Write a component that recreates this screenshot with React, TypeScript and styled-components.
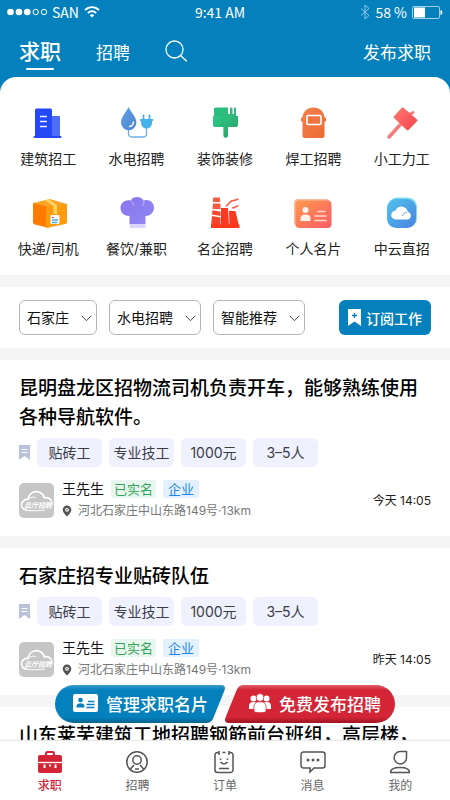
import React from "react";
import styled, { createGlobalStyle, css } from "styled-components";

const BLUE = "#0481bd";
const RED = "#d32535";

const GlobalStyle = createGlobalStyle`
  *, *::before, *::after { box-sizing: border-box; }
  body {
    margin: 0;
    background: #f5f5f5;
    font-family: Inter, "Noto Sans CJK SC", sans-serif;
    color: #111;
  }
  button, select { font: inherit; color: inherit; margin: 0; }
  button { border: 0; padding: 0; background: none; cursor: pointer; }
  a { color: inherit; text-decoration: none; }
  h2, p, ul { margin: 0; padding: 0; }
  ul { list-style: none; }
  svg { display: block; flex: none; }
`;

const Shell = styled.div`
  display: flex;
  flex-direction: column;
  height: 100vh;
  overflow: hidden;
`;

const Header = styled.header`
  background: ${BLUE};
  color: #fff;
`;

const StatusBar = styled.div`
  display: grid;
  grid-template-columns: 1fr auto 1fr;
  align-items: center;
  height: 24px;
  padding: 0 7px;
  font-family: "Noto Sans CJK SC", sans-serif;
  font-size: 14px;
  line-height: 24px;
`;

const Clock = styled.time`
  margin-right: 10px;
`;

const StatusGroup = styled.div<{ $end?: boolean }>`
  display: flex;
  align-items: center;
  gap: 5px;
  justify-content: ${(p) => (p.$end ? "flex-end" : "flex-start")};
`;

const TopTabs = styled.nav`
  display: flex;
  align-items: center;
  height: 53px;
  padding: 0 19px;
`;

const TopTab = styled.button<{ $active?: boolean }>`
  position: relative;
  font-size: 17px;
  line-height: 32px;
  margin-right: 35px;
  padding-top: 5px;
  ${(p) =>
    p.$active &&
    css`
      font-size: 21px;
      font-weight: 500;
      padding-top: 2px;
      &::after {
        content: "";
        position: absolute;
        left: 7px;
        right: 7px;
        bottom: -2px;
        height: 2px;
        border-radius: 1px;
        background: #fff;
      }
    `}
`;

const SearchButton = styled.button``;

const PostLink = styled.a`
  margin-left: auto;
  padding-top: 5px;
  font-size: 17px;
  line-height: 32px;
`;

const Content = styled.main`
  flex: 1;
  min-height: 0;
  overflow-y: auto;
  scrollbar-width: none;
  background: linear-gradient(${BLUE} 0 30px, #f5f5f5 30px);
`;

const CategoryPanel = styled.section`
  display: grid;
  grid-template-columns: repeat(5, 1fr);
  row-gap: 16px;
  padding: 27px 4px 7px;
  background: #fff;
  border-radius: 16px 16px 0 0;
`;

const Category = styled.a`
  display: flex;
  flex-direction: column;
  align-items: center;
  gap: 7px;
  height: 74px;
  font-size: 14px;
  line-height: 24px;
  white-space: nowrap;
  color: #222;
  padding-top: 2px;
`;

const FilterBar = styled.form`
  display: flex;
  gap: 12px;
  margin: 12px 0;
  padding: 13px 19px;
  background: #fff;
`;

const SelectBox = styled.div<{ $width: number }>`
  position: relative;
  width: ${(p) => p.$width}px;
`;

const Select = styled.select`
  appearance: none;
  width: 100%;
  height: 35px;
  padding: 0 0 0 7px;
  border: 1px solid #b5b5b5;
  border-radius: 6px;
  background: #fff;
  font-size: 14px;
`;

const Chevron = styled.svg`
  position: absolute;
  right: 5px;
  top: 15px;
  pointer-events: none;
`;

const SubscribeButton = styled.button`
  display: flex;
  align-items: center;
  justify-content: center;
  gap: 5px;
  width: 92px;
  height: 35px;
  margin-left: auto;
  border-radius: 6px;
  background: ${BLUE};
  color: #fff;
  font-size: 14px;
  font-weight: 500;
  white-space: nowrap;
`;

const JobCard = styled.article`
  margin-bottom: 12px;
  padding: 14px 19px 18px;
  background: #fff;
`;

const JobTitle = styled.h2`
  font-size: 19px;
  line-height: 29px;
  font-weight: 500;
  color: #000;
`;

const TagRow = styled.ul`
  display: flex;
  align-items: center;
  gap: 7px;
  margin: 6px 0 16px;
`;

const Tag = styled.li`
  min-width: 65px;
  border-radius: 6px;
  background: #eff1ff;
  color: #3c3c44;
  font-size: 14px;
  line-height: 29px;
  text-align: center;
`;

const PosterRow = styled.div`
  display: flex;
  align-items: center;
  gap: 8px;
`;

const PosterInfo = styled.div`
  flex: 1;
  height: 41px;
  margin: -3px 0;
`;

const NameLine = styled.div`
  display: flex;
  align-items: center;
  gap: 7px;
  font-size: 14px;
  line-height: 18px;
`;

const Badge = styled.span<{ $tone: "green" | "blue" }>`
  padding: 0 ${(p) => (p.$tone === "green" ? 3 : 5)}px;
  border-radius: 2px;
  font-size: 13px;
  color: ${(p) => (p.$tone === "green" ? "#35a35c" : "#1e86e8")};
  background: ${(p) => (p.$tone === "green" ? "#e8f7ed" : "#e3f1fe")};
`;

const Address = styled.p`
  display: flex;
  align-items: center;
  gap: 6px;
  margin-top: 4px;
  font-size: 12px;
  line-height: 18px;
  color: #777;
`;

const PostTime = styled.time`
  font-size: 12px;
  line-height: 18px;
  color: #222;
`;

const Footer = styled.footer`
  position: relative;
`;

const FloatingActions = styled.div`
  position: absolute;
  left: 0;
  right: 0;
  bottom: 100%;
  display: flex;
  justify-content: center;
  padding-bottom: 18px;
`;

const ActionButton = styled.button<{ $side: "left" | "right" }>`
  position: relative;
  z-index: 0;
  display: flex;
  align-items: center;
  gap: 8px;
  width: 170px;
  height: 38px;
  padding-left: ${(p) => (p.$side === "left" ? 18 : 24)}px;
  padding-bottom: 2px;
  color: #fff;
  font-size: 17px;
  font-weight: 500;
  white-space: nowrap;
  --fill: ${(p) =>
    p.$side === "left"
      ? "linear-gradient(#3b9ccb 0, #0481bd 5px, #0481bd 32px, #05648f 38px)"
      : "linear-gradient(#e0606b 0, #d32535 5px, #d32535 32px, #9f1523 38px)"};
  &::before, &::after {
    content: "";
    position: absolute;
    z-index: -1;
    top: 0;
    bottom: 0;
    background: var(--fill);
  }
  &::before {
    ${(p) => (p.$side === "left" ? "left: 0; right: 30px;" : "left: 30px; right: 0;")}
    border-radius: 19px;
  }
  &::after {
    ${(p) => (p.$side === "left" ? "left: 30px; right: 6px;" : "left: 6px; right: 30px;")}
    border-radius: 5px;
    transform: skewX(-22deg);
  }
`;

const BottomNav = styled.nav`
  display: grid;
  grid-template-columns: repeat(5, 1fr);
  height: 59px;
  padding: 9px 6px 0;
  background: #fff;
  box-shadow: 0 -1px 1px #e8e8e8;
  position: relative;
`;

const NavItem = styled.a<{ $active?: boolean }>`
  display: flex;
  flex-direction: column;
  align-items: center;
  gap: 3px;
  font-size: 12px;
  line-height: 18px;
  color: ${(p) => (p.$active ? RED : "#666")};
  font-weight: ${(p) => (p.$active ? 500 : 400)};
`;

const Gradient = ({ id, from, to }: { id: string; from: string; to: string }) => (
  <defs>
    <linearGradient id={id} x1="0" y1="0" x2="1" y2="1">
      <stop offset="0" stopColor={from} />
      <stop offset="1" stopColor={to} />
    </linearGradient>
  </defs>
);

const Art = ({ children }: { children: React.ReactNode }) => (
  <svg width="40" height="34" viewBox="0 0 40 34" aria-hidden="true">
    {children}
  </svg>
);

const categories: { label: string; art: React.ReactNode }[] = [
  {
    label: "建筑招工",
    art: (
      <Art>
        <rect x="20" y="10" width="12" height="22" rx="1" fill="#4c6df8" />
        <rect x="7" y="2.500" width="17" height="29" rx="1.500" fill="#2448f5" />
        <path d="M6 30.500h27v1H6z" fill="#2448f5" stroke="#2448f5" />
        <path d="M12 10.500h7M12 15.500h7M12 20.500h7" stroke="#e8edff" strokeWidth="1.600" />
      </Art>
    ),
  },
  {
    label: "水电招聘",
    art: (
      <Art>
        <Gradient id="drop" from="#62a3e4" to="#4a83d4" />
        <path d="M11.500 1C9 6.500 4 11 4 16.500a7.700 7.700 0 0 0 15.400 0C19.400 11 14 6.500 11.500 1z" fill="url(#drop)" />
        <path d="M12.500 20.500c2.200-.3 3.800-2 4-4.500" fill="none" stroke="#fff" strokeWidth="1.500" strokeLinecap="round" />
        <path d="M11.500 24v4a3 3 0 0 0 3 3h12a3 3 0 0 0 3-3v-8" fill="none" stroke="#6aaeea" strokeWidth="1.300" />
        <path d="M23 13h13v2h-1v2a5.500 5.500 0 0 1-11 0v-2h-1z" fill="#45b2ea" />
        <path d="M26.500 14V9.500M32.500 14V9.500" stroke="#45b2ea" strokeWidth="1.800" strokeLinecap="round" />
      </Art>
    ),
  },
  {
    label: "装饰装修",
    art: (
      <Art>
        <Gradient id="brush" from="#2ecb86" to="#2a9c66" />
        <path d="M10.500 1.500H23V8h2V2.500a1 1 0 0 1 1-1h.5a1 1 0 0 1 1 1V8h1.500V2.500a1 1 0 0 1 2 0V11H9V3a1.500 1.500 0 0 1 1.500-1.500z" fill="#2cbc7d" />
        <path d="M8 10h25v9a2 2 0 0 1-2 2h-8v8.500a2.300 2.300 0 0 1-4.600 0V21H10a2 2 0 0 1-2-2z" fill="url(#brush)" />
      </Art>
    ),
  },
  {
    label: "焊工招聘",
    art: (
      <Art>
        <Gradient id="mask" from="#f0814f" to="#ee6a32" />
        <path d="M9.500 11C10.500 5 14.500 1.500 20.500 1.500S30.500 5 31.500 11l1.500 1v3l-1.500 1v14a2 2 0 0 1-2 2h-18a2 2 0 0 1-2-2V16L8 15v-3z" fill="url(#mask)" />
        <rect x="14" y="9.500" width="14" height="9" rx="1" fill="#ee7440" stroke="#fff" strokeWidth="1.600" />
      </Art>
    ),
  },
  {
    label: "小工力工",
    art: (
      <Art>
        <Gradient id="hammer" from="#ff7a72" to="#f6424c" />
        <path d="M7 31L18 19" stroke="#f87a7c" strokeWidth="3.400" strokeLinecap="round" />
        <path d="M28 8l3-1.500" stroke="#f87a7c" strokeWidth="3" strokeLinecap="round" />
        <path d="M21.500 1.800l13.500 11.700a1.200 1.200 0 0 1 0 1.700L26.500 24a1.200 1.200 0 0 1-1.700 0L12 12a1.200 1.200 0 0 1 0-1.700l7.800-8.500a1.200 1.200 0 0 1 1.700 0z" fill="url(#hammer)" />
      </Art>
    ),
  },
  {
    label: "快递/司机",
    art: (
      <Art>
        <path d="M5 7l17-4 17 5-18 5z" fill="#f9a52a" />
        <path d="M5 7l16 4v21L7 28.500a2.500 2.500 0 0 1-2-2.500z" fill="#ff7a00" />
        <path d="M18 10.500L39 8v18a2 2 0 0 1-1.500 2L18 32z" fill="#ff9b0d" />
        <path d="M17 4.500l4-1 8 5.500v9h-3.500v-8z" fill="#ffd45c" />
        <rect x="22.500" y="19" width="9" height="9" rx="1" fill="#f3faff" />
        <path d="M24 24h6M24 26.500h5" stroke="#45aeea" strokeWidth="1.300" />
        <path d="M24 21.500h2" stroke="#f04d4d" />
      </Art>
    ),
  },
  {
    label: "餐饮/兼职",
    art: (
      <Art>
        <Gradient id="chef" from="#8b73ee" to="#8f8af4" />
        <path d="M12.500 28V20C7 20 3.500 16.500 3.500 11.500S9 3 13.500 4.500C15 2 17.500 1 20 1s5.500 1 6.500 3.500C32 2.500 37 6.500 37 11.500S33 20 28.500 20v8z" fill="url(#chef)" />
        <path d="M13.500 4.500c1.500 1 3 2.500 3 5M26.500 4.500c.8 2 .3 4-.8 5.500" fill="none" stroke="#c3b8fb" />
        <rect x="12.500" y="28" width="16" height="4" rx="1" fill="#dcd6fc" />
      </Art>
    ),
  },
  {
    label: "名企招聘",
    art: (
      <Art>
        <path d="M9 1.500h5a1 1 0 0 1 1 1V6H8V2.500a1 1 0 0 1 1-1z" fill="#fa5a40" />
        <path d="M8 7.500h7.500V13H7.500z" fill="#fa5a40" />
        <path d="M7.500 14.200l8 1.500V20l-8.500-1.500zM7 20l8.500 1.500V30H6z" fill="#f8442c" />
        <path d="M16 12h7l1 18h-8zM24 15h6.500L34 30h-9.500z" fill="#fa3a20" />
        <path d="M6 28.500h28.500V32H6z" fill="#f93618" />
        <path d="M20.500 10c4 0 3-6 8-5.500 2 .3 3-1.500 5-1.500M27 11.500c3 1.500 3-2 6.500-1.500" fill="none" stroke="#fa5a40" strokeWidth="1.600" />
      </Art>
    ),
  },
  {
    label: "个人名片",
    art: (
      <Art>
        <Gradient id="idcard" from="#ff9a4d" to="#fb5a68" />
        <rect x="1" y="3" width="36" height="27" rx="4" fill="#fdb7a0" />
        <rect x="2.500" y="4.500" width="36" height="27.500" rx="4" fill="url(#idcard)" />
        <circle cx="12.500" cy="14" r="3" fill="#fff0e8" />
        <path d="M7.500 25v-3c0-2 2-3.500 5-3.500s5 1.500 5 3.500v3z" fill="#fff0e8" />
        <path d="M25 15.500h7M22 20h11M22 24.500h11" stroke="#ffd8c8" strokeWidth="1.700" strokeLinecap="round" />
      </Art>
    ),
  },
  {
    label: "中云直招",
    art: (
      <Art>
        <Gradient id="cloud" from="#4fc4ee" to="#4b82e0" />
        <rect x="6" y="1.500" width="29" height="30" rx="9" fill="#7edcf0" />
        <rect x="5" y="3" width="29" height="29" rx="9" fill="url(#cloud)" />
        <path d="M14 23.500a4.500 4.500 0 0 1-.5-9 6.500 6.500 0 0 1 12.300 1.200 4 4 0 0 1-.3 7.800z" fill="#fff" />
        <path d="M20.500 20c.3-2 2-3.500 4.300-3.500" fill="none" stroke="#5c9fe8" />
      </Art>
    ),
  },
];

const filters = [
  { label: "城市", value: "石家庄", width: 78 },
  { label: "工种", value: "水电招聘", width: 92 },
  { label: "排序", value: "智能推荐", width: 92 },
];

const jobs = [
  { title: "昆明盘龙区招物流司机负责开车，能够熟练使用各种导航软件。", time: "今天 14:05" },
  { title: "石家庄招专业贴砖队伍", time: "昨天 14:05" },
  { title: "山东莱芜建筑工地招聘钢筋前台班组，高层楼，", time: "昨天 14:05" },
];

const tags = ["贴砖工", "专业技工", "1000元", "3–5人"];

const NavIcon = ({ children }: { children: React.ReactNode }) => (
  <svg width="26" height="24" viewBox="0 0 26 24" fill="none" stroke="#555" strokeWidth="1.500" aria-hidden="true">
    {children}
  </svg>
);

const navItems: { label: string; icon: React.ReactNode }[] = [
  {
    label: "求职",
    icon: (
      <NavIcon>
        <path d="M9 6V3.500A1.500 1.500 0 0 1 10.500 2h5A1.500 1.500 0 0 1 17 3.500V6" stroke={RED} strokeWidth="2" />
        <path d="M3 5h20a2 2 0 0 1 2 2v14a2 2 0 0 1-2 2H3a2 2 0 0 1-2-2V7a2 2 0 0 1 2-2z" fill={RED} stroke="none" />
        <path d="M1 12.500h24" stroke="#fff" strokeWidth="1.300" />
        <path d="M7.500 14.500v3.500M18.500 14.500v3.500" stroke="#fff" strokeWidth="2" />
        <path d="M12 15.500h2" stroke="#fff" strokeWidth="2" />
      </NavIcon>
    ),
  },
  {
    label: "招聘",
    icon: (
      <NavIcon>
        <circle cx="13" cy="12" r="10.200" />
        <circle cx="13" cy="10" r="4.200" />
        <path d="M6 19.500l4-4.500M20 19.500L16 15M11 19h4" />
      </NavIcon>
    ),
  },
  {
    label: "订单",
    icon: (
      <NavIcon>
        <path d="M7 2.500H5.500A2.500 2.500 0 0 0 3 5v15a2.500 2.500 0 0 0 2.500 2.500h13A2.500 2.500 0 0 0 21 20V5a2.500 2.500 0 0 0-2.500-2.500H17" />
        <path d="M7 1v4M17 1v4M10.500 2.500h3" />
        <path d="M8.500 8.500v1.500M15.500 8.500v1.500M8.500 12c2 2.500 5 2.500 7 0M7 18.500h10" />
      </NavIcon>
    ),
  },
  {
    label: "消息",
    icon: (
      <NavIcon>
        <path d="M3.500 2h19a2.500 2.500 0 0 1 2.500 2.500v11a2.500 2.500 0 0 1-2.500 2.500H14l-4 4v-4H3.500A2.500 2.500 0 0 1 1 15.500v-11A2.500 2.500 0 0 1 3.500 2z" />
        <path d="M8 10h.01M13 10h.01M18 10h.01" strokeWidth="3" strokeLinecap="round" />
      </NavIcon>
    ),
  },
  {
    label: "我的",
    icon: (
      <NavIcon>
        <path d="M19.500 1.500v6.500a6.200 6.200 0 1 1-6.500-6.500z" strokeLinejoin="round" />
        <path d="M3.500 22.500c0-3.500 4-5 9.500-5s9.500 1.500 9.500 5z" strokeLinejoin="round" />
      </NavIcon>
    ),
  },
];

const Avatar = () => (
  <svg width="35" height="35" viewBox="0 0 35 35" role="img" aria-label="云厅招聘">
    <rect width="35" height="35" rx="5" fill="#c6c6c6" />
    <path d="M7 27C2 26 1 20 5 17.500c1-1 3-1.200 4-1C10 10 16 7 21 9.500c3 1.500 4 3.500 4.500 5.500 3-1 6 .5 7 3" fill="none" stroke="#fff" strokeWidth="1.600" strokeLinecap="round" />
    <path d="M10 16c2-2 5-2.500 7-1" fill="none" stroke="#fff" />
    <path d="M6 27c7 1.300 14 .8 20 0" fill="none" stroke="#fff" />
    <text x="5" y="24.500" fontSize="7" fontWeight="700" fontStyle="italic" fill="#fff">云厅招聘</text>
  </svg>
);

const Bookmark = () => (
  <svg width="11" height="15" viewBox="0 0 11 15" aria-hidden="true">
    <path d="M0 0h11v15l-5.500-4L0 15z" fill="#b9c2d8" />
    <path d="M2.500 4.500h6M2.500 7.500h6" stroke="#fff" strokeWidth="1.200" />
  </svg>
);

const Pin = () => (
  <svg width="10" height="12" viewBox="0 0 10 12" aria-hidden="true">
    <path d="M5 .5a4.300 4.300 0 0 0-4.300 4.300C.7 7.500 3.500 10 5 11.500 6.500 10 9.300 7.500 9.300 4.800A4.300 4.300 0 0 0 5 .5z" fill="#555" />
    <circle cx="5" cy="4.800" r="1.900" fill="#fff" />
    <circle cx="5" cy="4.800" r=".8" fill="#555" />
  </svg>
);

export default function App() {
  return (
    <Shell>
      <GlobalStyle />
      <Header>
        <StatusBar>
          <StatusGroup>
            <svg width="40" height="8" viewBox="0 0 40 8" aria-hidden="true">
              <circle cx="3.500" cy="4" r="3.300" fill="#fff" />
              <circle cx="12" cy="4" r="3.300" fill="#fff" />
              <circle cx="20.300" cy="4" r="3.300" fill="#fff" />
              <circle cx="28.700" cy="4" r="2.700" fill="none" stroke="#fff" />
              <circle cx="37" cy="4" r="2.700" fill="none" stroke="#fff" />
            </svg>
            <span>SAN</span>
            <svg width="16" height="12" viewBox="0 0 16 12" fill="none" stroke="#fff" strokeWidth="1.800" aria-hidden="true">
              <path d="M1 4.200c4-4 10-4 14 0M3.800 7c2.500-2.400 6-2.400 8.400 0" />
              <path d="M5.800 9.200c1.300-1.200 3.100-1.200 4.400 0L8 11.500z" fill="#fff" stroke="none" />
            </svg>
          </StatusGroup>
          <Clock>9:41 AM</Clock>
          <StatusGroup $end>
            <svg width="10" height="16" viewBox="0 0 10 16" fill="none" stroke="#8fc6e3" aria-hidden="true">
              <path d="M1 4.500l8 7L5 15V1l4 3.500-8 7" />
            </svg>
            <span>58 %</span>
            <svg width="31" height="13" viewBox="0 0 31 13" aria-hidden="true">
              <rect x=".5" y=".5" width="27" height="12" rx="1.500" fill="none" stroke="#9fd0e8" />
              <rect x="2" y="1.500" width="11" height="10" fill="#fff" />
              <path d="M28.500 4c2.500.5 2.500 4.500 0 5z" fill="#fff" />
            </svg>
          </StatusGroup>
        </StatusBar>
        <TopTabs>
          <TopTab $active>求职</TopTab>
          <TopTab>招聘</TopTab>
          <SearchButton aria-label="搜索">
            <svg width="23" height="22" viewBox="0 0 23 22" fill="none" stroke="#fff" strokeWidth="1.300" strokeLinecap="round">
              <circle cx="9.500" cy="9.500" r="8.500" />
              <path d="M15.500 15.500l6 5.500" />
            </svg>
          </SearchButton>
          <PostLink href="#post">发布求职</PostLink>
        </TopTabs>
      </Header>

      <Content>
        <CategoryPanel>
          {categories.map((c) => (
            <Category key={c.label} href="#category">
              {c.art}
              <span>{c.label}</span>
            </Category>
          ))}
        </CategoryPanel>

        <FilterBar>
          {filters.map((f) => (
            <SelectBox key={f.label} $width={f.width}>
              <Select aria-label={f.label} defaultValue={f.value}>
                <option>{f.value}</option>
              </Select>
              <Chevron width="11" height="7" viewBox="0 0 11 7" fill="none" stroke="#444" aria-hidden="true">
                <path d="M.7.700l4.800 5 4.800-5" />
              </Chevron>
            </SelectBox>
          ))}
          <SubscribeButton type="button">
            <svg width="13" height="17" viewBox="0 0 13 17" aria-hidden="true">
              <path d="M0 0h13v17l-6.500-4.500L0 17z" fill="#fff" />
              <path d="M6.500 4v5M4 6.500h5" stroke={BLUE} strokeWidth="1.300" />
            </svg>
            订阅工作
          </SubscribeButton>
        </FilterBar>

        {jobs.map((job) => (
          <JobCard key={job.title}>
            <JobTitle>{job.title}</JobTitle>
            <TagRow>
              <li>
                <Bookmark />
              </li>
              {tags.map((t) => (
                <Tag key={t}>{t}</Tag>
              ))}
            </TagRow>
            <PosterRow>
              <Avatar />
              <PosterInfo>
                <NameLine>
                  王先生
                  <Badge $tone="green">已实名</Badge>
                  <Badge $tone="blue">企业</Badge>
                </NameLine>
                <Address>
                  <Pin />
                  河北石家庄中山东路149号·13km
                </Address>
              </PosterInfo>
              <PostTime>{job.time}</PostTime>
            </PosterRow>
          </JobCard>
        ))}
      </Content>

      <Footer>
        <FloatingActions>
          <ActionButton $side="left">
            <svg width="25" height="18" viewBox="0 0 25 18" aria-hidden="true">
              <rect width="25" height="18" rx="2" fill="#fff" />
              <circle cx="7.500" cy="6" r="2.300" fill={BLUE} />
              <path d="M3.500 13.500v-1.500c0-2 2-2.800 4-2.800s4 .8 4 2.800v1.500z" fill={BLUE} />
              <path d="M15 7.500h6.500M13.500 10.500h8M13.500 13.500h8" stroke={BLUE} strokeWidth="1.300" />
            </svg>
            管理求职名片
          </ActionButton>
          <ActionButton $side="right">
            <svg width="22" height="20" viewBox="0 0 22 20" fill="#fff" aria-hidden="true">
              <circle cx="4.500" cy="5.500" r="3" />
              <circle cx="17.500" cy="5.500" r="3" />
              <path d="M0 16v-3.500C0 10 2 9 4.500 9S9 10 9 12.500V16zM13 16v-3.500C13 10 15 9 17.500 9s4.500 1 4.500 3.500V16z" />
              <g stroke={RED} strokeWidth=".8">
                <circle cx="11" cy="4.500" r="3.900" />
                <path d="M5 19v-5.500C5 10 7.500 8.700 11 8.700s6 1.300 6 4.800V19c-3 1-9 1-12 0z" />
              </g>
            </svg>
            免费发布招聘
          </ActionButton>
        </FloatingActions>
        <BottomNav>
          {navItems.map((n, i) => (
            <NavItem key={n.label} href="#nav" $active={i === 0}>
              {n.icon}
              {n.label}
            </NavItem>
          ))}
        </BottomNav>
      </Footer>
    </Shell>
  );
}
